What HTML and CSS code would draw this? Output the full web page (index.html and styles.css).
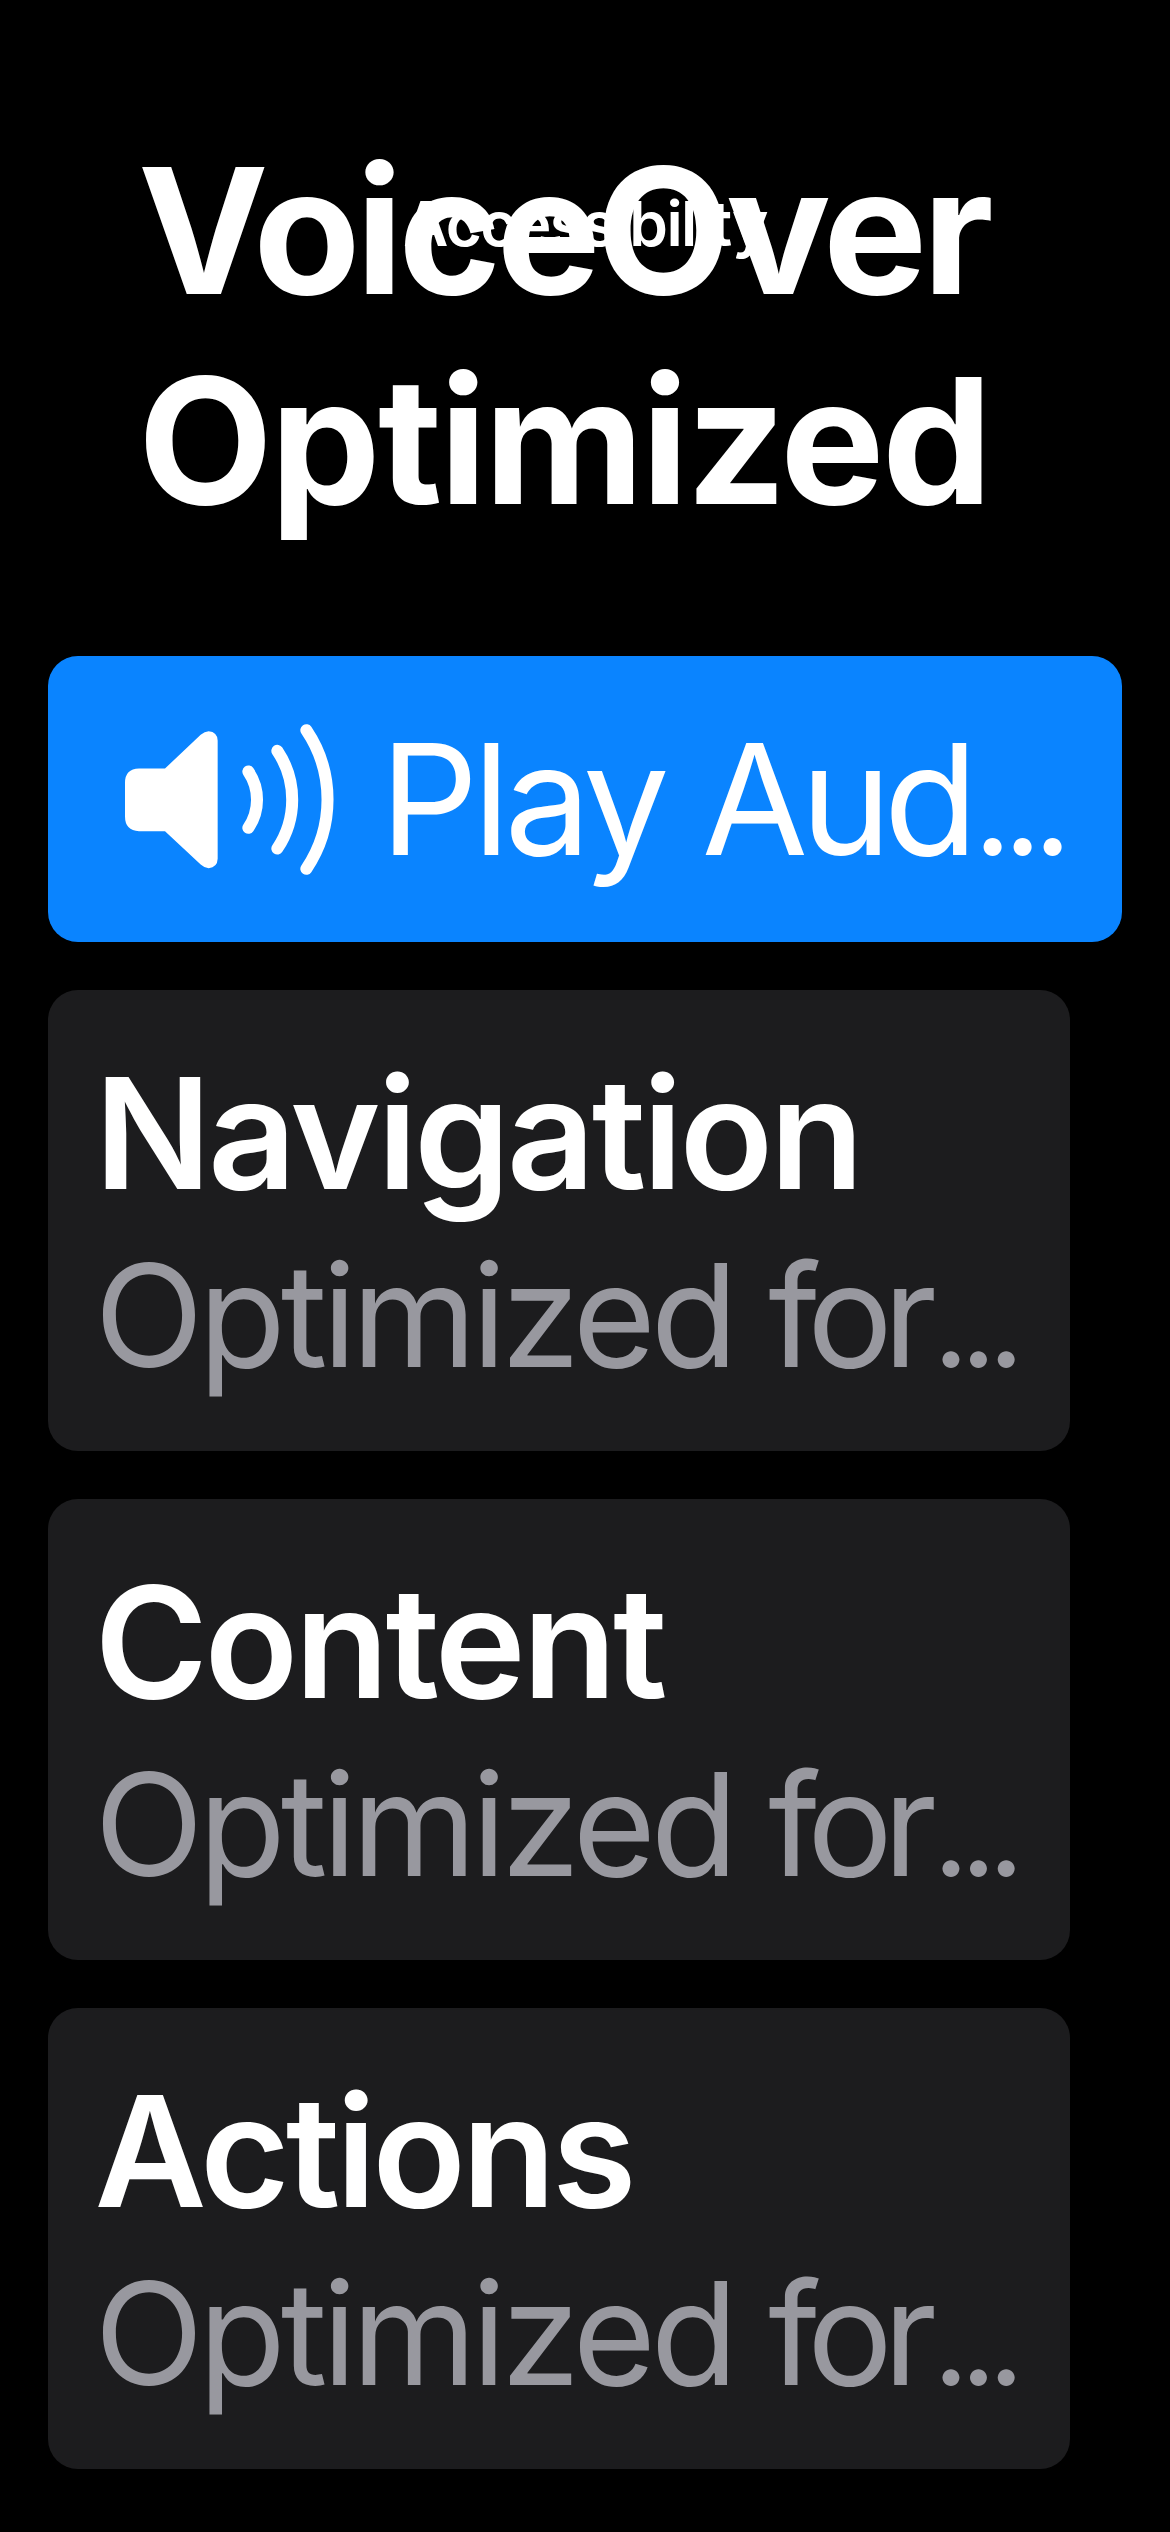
FILE: index.html
```
<!DOCTYPE html>
<html lang="en">
<head>
<meta charset="utf-8">
<title>Accessibility</title>
<link rel="stylesheet" href="styles.css">
</head>
<body>
<header class="nav-bar">Accessibility</header>
<main class="page">
  <h1 class="title"><span class="title-first">VoiceOver</span> <span class="title-second">Optimized</span></h1>
  <button class="play" type="button">
    <svg class="play-icon" viewBox="75 71 627 452" aria-hidden="true">
      <path fill="#fff" d="M117 204H195L302 103Q314 92 326 92Q352 94 353 120V475Q352 501 326 503Q314 503 302 492L195 392H117Q75 390 75 348V247Q75 205 117 204Z"/>
      <g fill="none" stroke="#fff" stroke-width="36" stroke-linecap="round">
        <path d="M445 213A150 150 0 0 1 445 382"/>
        <path d="M532 151A263 263 0 0 1 532 444"/>
        <path d="M619 89A372 372 0 0 1 619 505"/>
      </g>
    </svg>
    <span class="play-label">Play <span class="tight">Aud</span><span class="dots">...</span></span>
  </button>
  <section class="card">
    <h2 class="card-title">Navigation</h2>
    <p class="card-text">Optimized <span class="tight">for</span><span class="dots">...</span></p>
  </section>
  <section class="card">
    <h2 class="card-title">Content</h2>
    <p class="card-text">Optimized <span class="tight">for</span><span class="dots">...</span></p>
  </section>
  <section class="card">
    <h2 class="card-title card-title-tight">Actions</h2>
    <p class="card-text">Optimized <span class="tight">for</span><span class="dots">...</span></p>
  </section>
</main>
</body>
</html>
```
FILE: styles.css
```
* {
  box-sizing: border-box;
}

body {
  margin: 0;
  height: 2532px;
  overflow: hidden;
  background: #000;
  color: #fff;
  font-family: Inter, "Liberation Sans", sans-serif;
}

/* The bar floats over the scrolled content. */
.nav-bar {
  position: absolute;
  top: 186px;
  left: 0;
  width: 1170px;
  text-align: center;
  font-size: 62px;
  font-weight: 600;
  line-height: 76px;
  letter-spacing: -1.6px;
}

.page {
  display: flex;
  flex-direction: column;
  align-items: flex-start;
  gap: 48px;
  width: 1170px;
  padding: 125px 48px 0;
}

.title {
  display: flex;
  flex-direction: column;
  margin: 0 0 63px;
  padding-left: 90px;
  font-size: 175px;
  font-weight: 700;
  line-height: 210px;
}

.title-first {
  letter-spacing: -4.8px;
}

.title-second {
  letter-spacing: -2.6px;
}

.play {
  display: flex;
  align-items: center;
  gap: 46px;
  width: 1074px;
  height: 286px;
  padding: 0 0 0 77px;
  border: 0;
  border-radius: 30px;
  background: #0a84ff;
  color: #fff;
  font-family: inherit;
  font-size: 154px;
  line-height: 186px;
  letter-spacing: -5.6px;
  white-space: nowrap;
}

.play-icon {
  width: 209px;
  height: 151px;
  flex: none;
}

.play .tight {
  letter-spacing: -7.6px;
}

.play .dots {
  margin-left: 2.5px;
  font-size: 136px;
  line-height: 1;
  letter-spacing: -9.2px;
}

.card {
  width: 1022px;
  height: 461px;
  padding: 51px 0 0 46.5px;
  border-radius: 30px;
  background: #1c1c1e;
  white-space: nowrap;
}

.card-title {
  margin: 0;
  font-size: 154px;
  font-weight: 600;
  line-height: 184px;
  letter-spacing: -3.5px;
}

.card-title-tight {
  letter-spacing: -4.1px;
}

.card-text {
  margin: 4px 0 0;
  color: #98989f;
  font-size: 142.5px;
  line-height: 172px;
  letter-spacing: -5px;
}

.card .tight {
  letter-spacing: -9.5px;
}

.card .dots {
  margin-left: 5px;
  font-size: 128px;
  line-height: 1;
  letter-spacing: -9.2px;
}
```
